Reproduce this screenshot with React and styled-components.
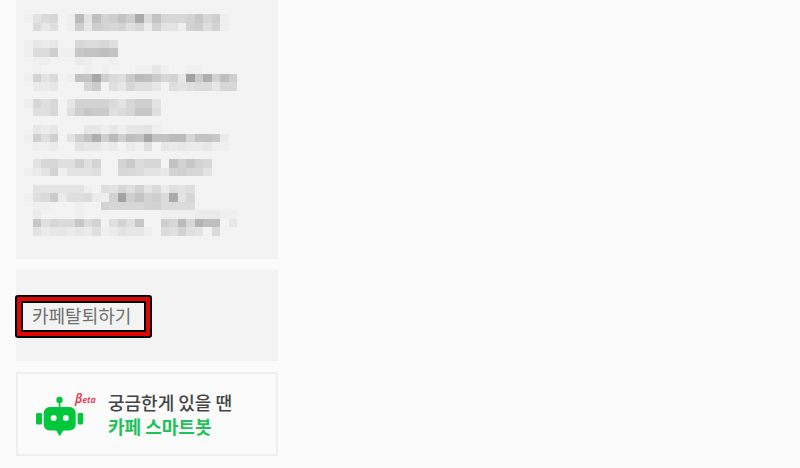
import styled, { createGlobalStyle } from "styled-components";

const colors = {
  page: "#fbfbfb",
  panel: "#f3f3f3",
  line: "#efefef",
  text: "#707070",
  dark: "#444",
  green: "#00c73c",
  green_text: "#1ec15a",
  red: "#e00606",
  beta: "#e8344e",
};

const GlobalStyle = createGlobalStyle`
  * {
    box-sizing: border-box;
  }

  body {
    margin: 0;
    background-color: ${colors.page};
    font-family: "Noto Sans CJK KR", sans-serif;
  }

  a {
    text-decoration: none;
  }
`;

const Sidebar = styled.aside`
  display: flex;
  flex-direction: column;
  gap: 11px;
  max-width: 294px;
  padding: 0 16px 12px;
`;

const Panel = styled.section`
  padding: ${(props) => props.$padding};
  background-color: ${colors.panel};
`;

const MosaicSvg = styled.svg`
  display: block;
  width: 222px;
  height: 222px;
`;

const LeaveLink = styled.a`
  display: block;
  width: fit-content;
  position: relative;
  color: ${colors.text};
  font-size: 18px;
  font-weight: 400;
  line-height: 27px;
`;

const Highlight = styled.span`
  position: absolute;
  inset: -7px -21px -9px -17px;
  border: 2px solid #000;
  border-radius: 3px;
  box-shadow: inset 0 0 0 4px ${colors.red}, inset 0 0 0 6px #000;
  pointer-events: none;
`;

const BotBanner = styled.a`
  display: flex;
  align-items: center;
  gap: 24px;
  padding: 16px 18px;
  border: 2px solid ${colors.line};
`;

const BotIcon = styled.span`
  position: relative;
  flex: none;
  padding-top: 5px;

  svg {
    display: block;
  }
`;

const Beta = styled.span`
  position: absolute;
  top: 1px;
  left: 39px;
  color: ${colors.beta};
  font: italic 9px/14px "Noto Sans", sans-serif;
  font-weight: 600;

  b {
    font-size: 12px;
    font-weight: 600;
  }
`;

const BotText = styled.span`
  display: flex;
  flex-direction: column;
  color: ${colors.dark};
  font-size: 18px;
  font-weight: 500;
  line-height: 24px;

  strong {
    color: ${colors.green_text};
    font-weight: 700;
  }
`;

// one character per cell, base 36, a higher value is darker
const mosaicRows = [
  "146701e4d89c9i6c7778b791",
  "063501939878572844189581",
  "",
  "13230076675",
  "166911bccdc",
  "01100021001",
  "010000010100011310011",
  "184601ccj965aeda783kah8d9",
  "02230007a0537553054566377",
  "",
  "1757038888647994",
  "0557059baa567bb5",
  "",
  "0323000331313341",
  "1959049ch9e9dcjccee7ccb2",
  "011200433120215032322311",
  "",
  "047755958008a6770c8b87",
  "1248144450077644389774",
  "",
  "04444441054758462545",
  "156a2556218k9c896i47",
  "01100010087777886666",
  "0200001000000000111122211",
  "0b5766b680585b0097e7gdd03",
  "04233232512433106585406",
];

const Mosaic = () => (
  <MosaicSvg viewBox="0 0 26 26" shapeRendering="crispEdges" aria-hidden="true">
    {mosaicRows.map((row, y) =>
      [...row].map((cell, x) => {
        const shade = 243 - parseInt(cell, 36) * 4;
        return cell === "0" ? null : (
          <rect
            key={`${x}-${y}`}
            x={x}
            y={y}
            width="1"
            height="1"
            fill={`rgb(${shade}, ${shade}, ${shade})`}
          />
        );
      })
    )}
  </MosaicSvg>
);

const Robot = () => (
  <svg width="48" height="41" viewBox="0 0 48 41" fill={colors.green} aria-hidden="true">
    <circle cx="23.5" cy="4" r="3.2" />
    <rect x="22.7" y="5" width="1.7" height="8" />
    <rect x="7.7" y="11" width="32" height="23.6" rx="6" />
    <path d="M20 34h7.5l-3.1 5.2q-.7 1-1.4 0z" />
    <rect x="0" y="17" width="6" height="11.5" rx="1.4" />
    <rect x="41.6" y="17" width="5.6" height="11.5" rx="1.4" />
    <circle cx="17.7" cy="22" r="3" fill={colors.page} />
    <circle cx="29.8" cy="22" r="3" fill={colors.page} />
  </svg>
);

const App = () => {
  return (
    <>
      <GlobalStyle />
      <Sidebar>
        <Panel $padding="14px 8px 23px">
          <Mosaic />
        </Panel>
        <Panel $padding="32px 16px">
          <LeaveLink href="#leave">
            카페탈퇴하기
            <Highlight />
          </LeaveLink>
        </Panel>
        <BotBanner href="#smartbot">
          <BotIcon>
            <Robot />
            <Beta>
              <b>β</b>eta
            </Beta>
          </BotIcon>
          <BotText>
            <span>궁금한게 있을 땐</span>
            <strong>카페 스마트봇</strong>
          </BotText>
        </BotBanner>
      </Sidebar>
    </>
  );
};

export default App;
